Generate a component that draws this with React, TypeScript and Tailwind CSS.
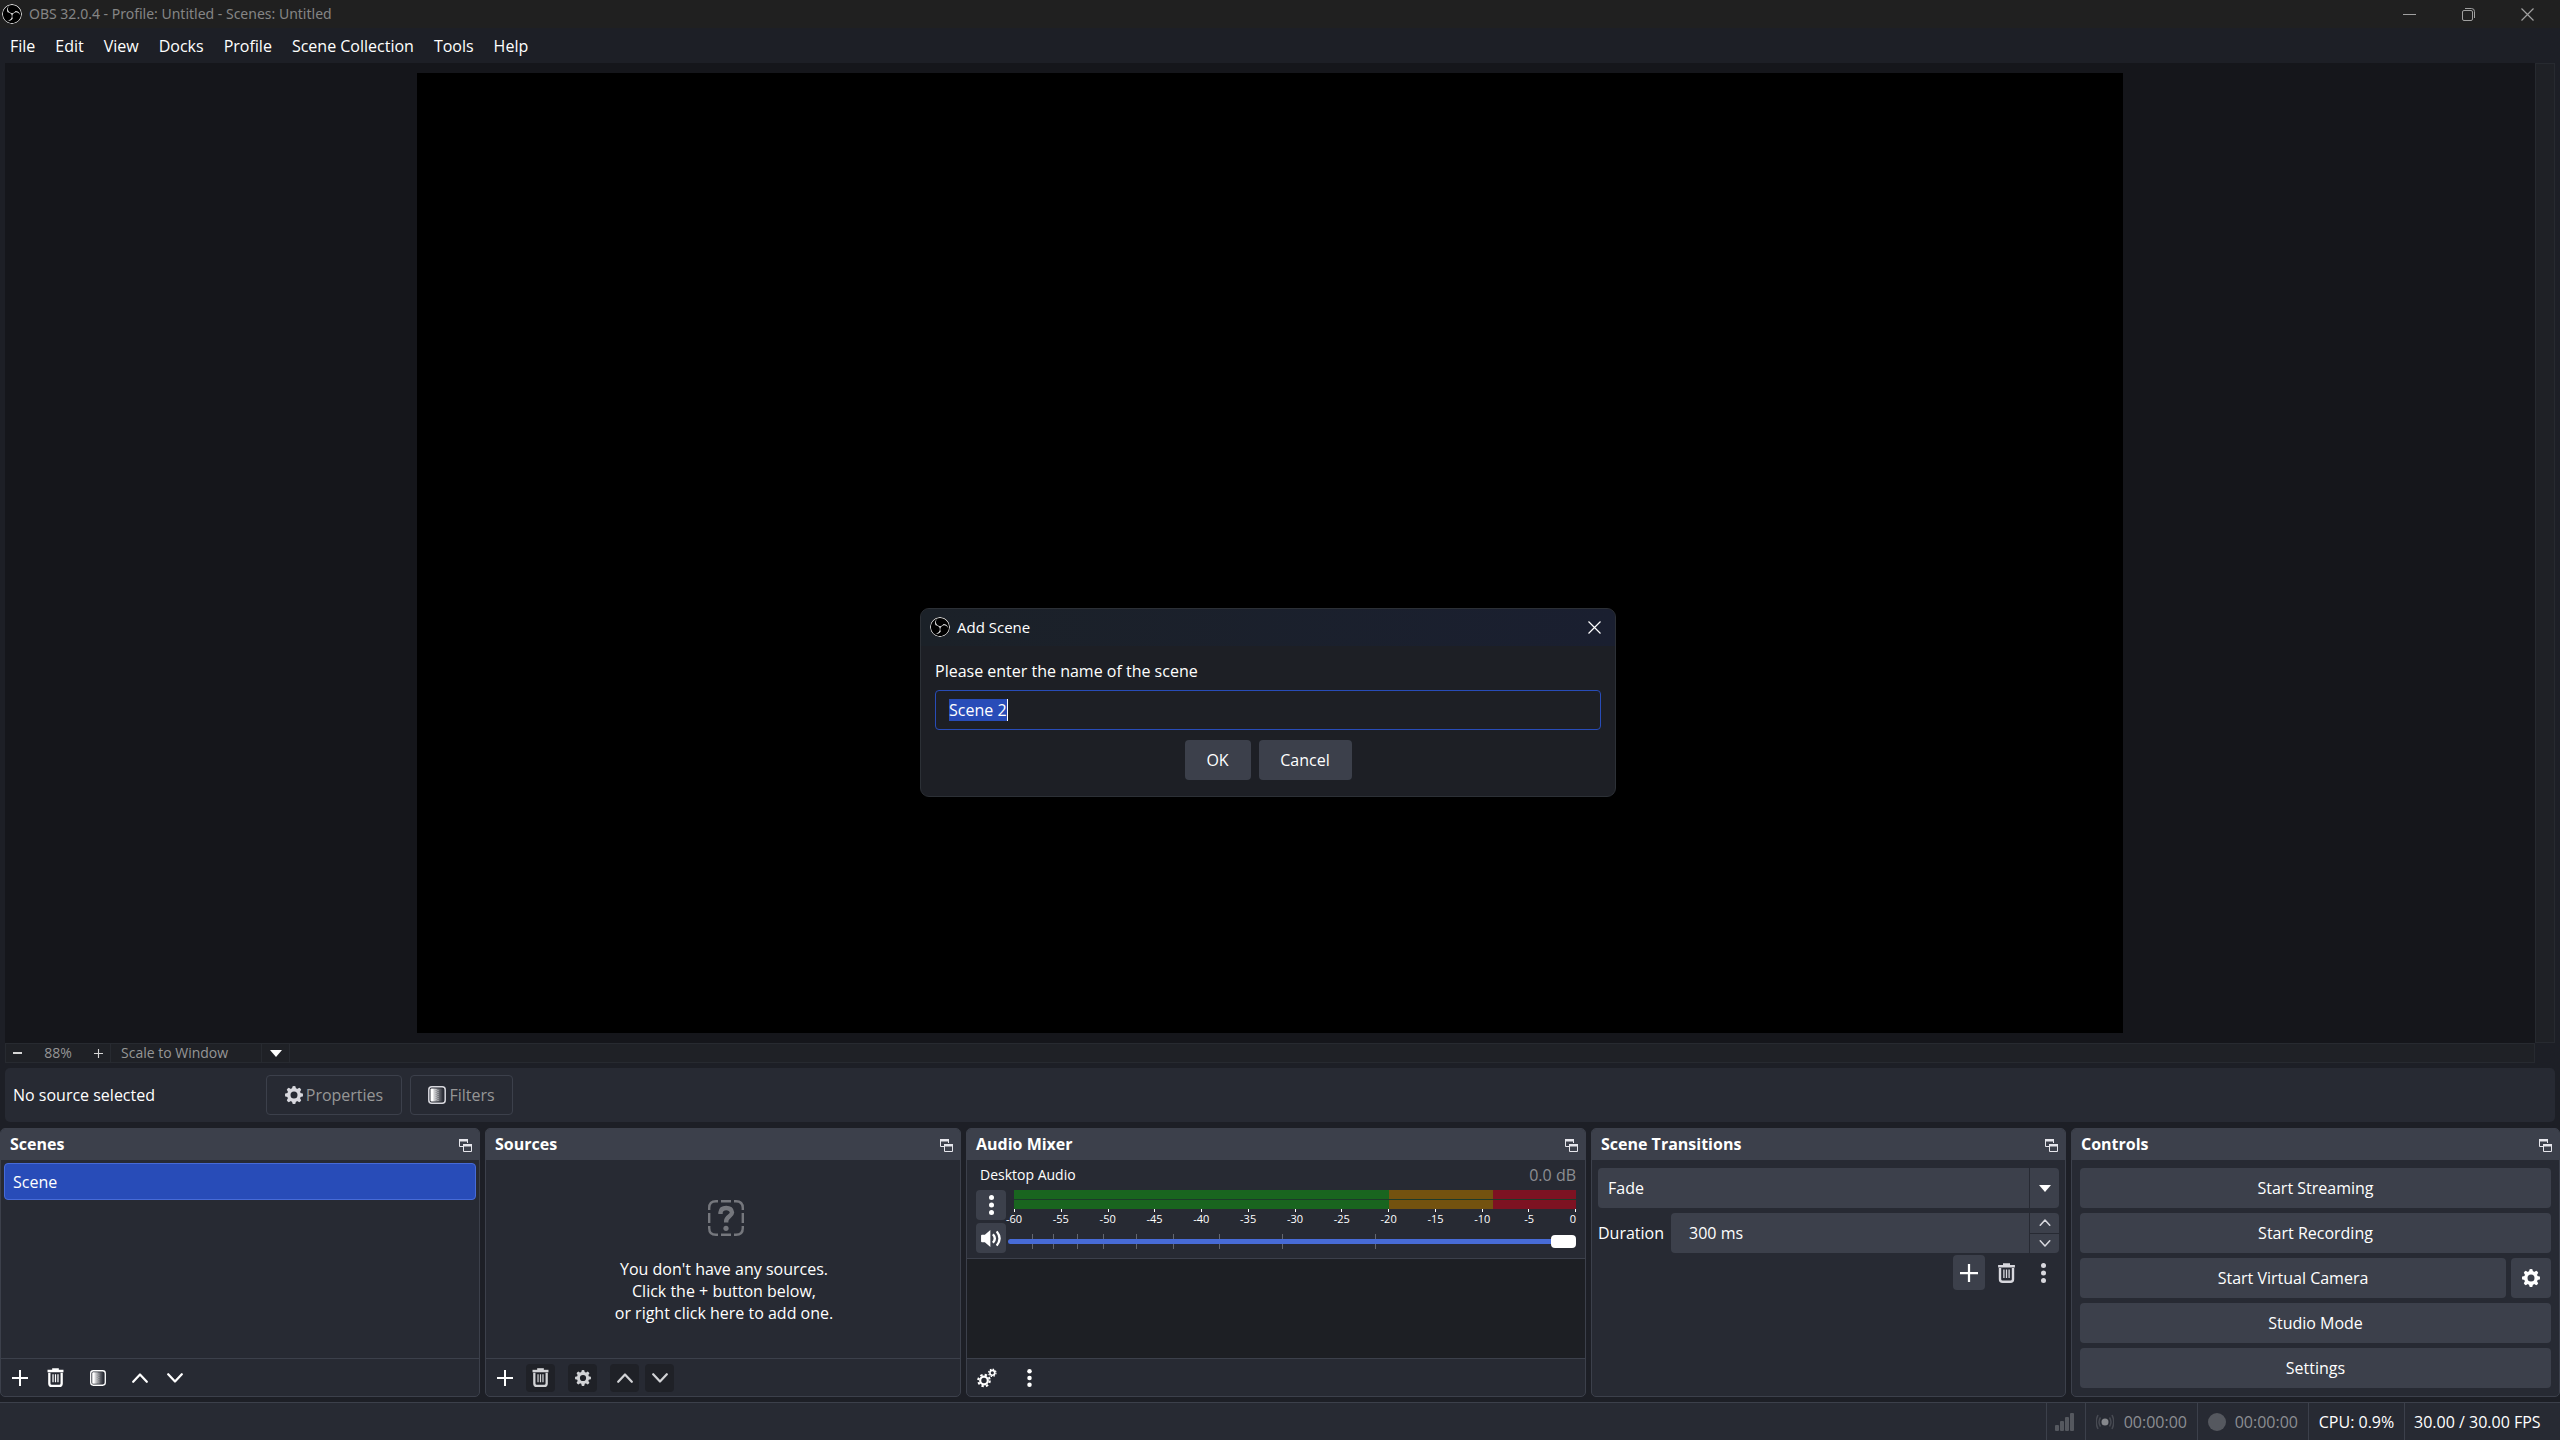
import React, { useEffect, useRef, useState } from "react";
import { SiObsstudio } from "react-icons/si";

type IconProps = { className?: string };

function Logo() {
  return <SiObsstudio className="size-5 shrink-0 rounded-full bg-black text-[#e8e8e8]" aria-hidden />;
}

function Gear({ className = "size-[18px]" }: IconProps) {
  const teeth = [0, 45, 90, 135, 180, 225, 270, 315];
  return (
    <svg viewBox="0 0 18 18" className={className} fill="currentColor" aria-hidden>
      <circle cx="9" cy="9" r="5.2" fill="none" stroke="currentColor" strokeWidth="3.4" />
      {teeth.map((a) => (
        <path key={a} d="M6.9 3 7.6.2Q9-.2 10.4.2L11.1 3Z" transform={`rotate(${a} 9 9)`} />
      ))}
    </svg>
  );
}

function Gears() {
  return (
    <svg viewBox="0 0 20 20" className="size-5" fill="none" stroke="currentColor" aria-hidden>
      <circle cx="7" cy="12.5" r="3.8" strokeWidth="2.2" />
      <circle cx="7" cy="12.5" r="5.8" strokeWidth="2" strokeDasharray="2.4 2.155" />
      <circle cx="15.3" cy="4.8" r="2.4" strokeWidth="1.6" />
      <circle cx="15.3" cy="4.8" r="3.7" strokeWidth="1.2" strokeDasharray="1.5 1.406" />
    </svg>
  );
}

function Trash({ className = "size-[19px]" }: IconProps) {
  return (
    <svg viewBox="0 0 18 20" className={className} fill="none" stroke="currentColor" aria-hidden>
      <path d="M.6 3.2H17.4" strokeWidth="2.6" />
      <path d="M5.5 1.2h7" strokeWidth="2" />
      <path d="M2.5 5v11.2q0 2.6 2.6 2.6h7.8q2.6 0 2.6-2.6V5" strokeWidth="2.4" />
      <path d="M6.4 6.5v8.5M9 6.5v8.5M11.6 6.5v8.5" strokeWidth="1.3" />
    </svg>
  );
}

function Plus({ className = "size-4" }: IconProps) {
  return (
    <svg viewBox="0 0 16 16" className={className} stroke="currentColor" strokeWidth="2" aria-hidden>
      <path d="M8 0v16M0 8h16" />
    </svg>
  );
}

function Chevron({ up = false, className = "w-4 h-[10px]" }: IconProps & { up?: boolean }) {
  return (
    <svg viewBox="0 0 16 10" className={className} fill="none" stroke="currentColor" strokeWidth="2.2" strokeLinecap="round" strokeLinejoin="round" aria-hidden>
      <path d={up ? "M1.2 8.8 8 1.5l6.8 7.3" : "M1.2 1.2 8 8.5l6.8-7.3"} />
    </svg>
  );
}

function Dots({ className = "w-[5px] h-5" }: IconProps) {
  return (
    <svg viewBox="0 0 5 20" className={className} fill="currentColor" aria-hidden>
      <circle cx="2.5" cy="2.5" r="2.5" />
      <circle cx="2.5" cy="10" r="2.5" />
      <circle cx="2.5" cy="17.5" r="2.5" />
    </svg>
  );
}

function FilterIcon({ className = "size-[18px]" }: IconProps) {
  return (
    <svg viewBox="0 0 18 18" className={className} aria-hidden>
      <defs>
        <linearGradient id="filterFade" x1="0" x2="1">
          <stop offset="0.15" stopColor="#fff" />
          <stop offset="0.5" stopColor="#fff" stopOpacity="0.45" />
          <stop offset="0.95" stopColor="#fff" stopOpacity="0.02" />
        </linearGradient>
      </defs>
      <rect x="0.8" y="0.8" width="16.4" height="16.4" rx="3" fill="none" stroke="currentColor" strokeWidth="1.5" />
      <rect x="2.5" y="2.5" width="13" height="13" rx="1" fill="url(#filterFade)" />
      <path d="M8 3v12M10 4v12" stroke="#fff" strokeWidth="1" strokeDasharray="1 1" opacity="0.5" />
    </svg>
  );
}

function Popout() {
  return (
    <svg viewBox="0 0 13 13" className="size-[13px]" fill="none" stroke="currentColor" aria-hidden>
      <path d="M0 1.2h9" strokeWidth="2.4" />
      <path d="M.5 1v6.5H4M8.5 1v3" />
      <path d="M4 6.2h9" strokeWidth="2.4" />
      <path d="M4.5 6v6.5h8V6" />
    </svg>
  );
}

function Speaker() {
  return (
    <svg viewBox="0 0 22 20" className="h-[19px] w-[21px]" fill="currentColor" aria-hidden>
      <path d="M0 7q0-1 1-1h3L9.8 1V19L4 14H1q-1 0-1-1Z" />
      <path d="M12.5 5.5q4 4.5 0 9M16.5 2.5q6 7.5 0 15" fill="none" stroke="currentColor" strokeWidth="2.5" />
    </svg>
  );
}

function QuestionBox() {
  return (
    <svg viewBox="0 0 36 36" className="ml-1 size-9 text-[#75777d]" fill="none" stroke="currentColor" strokeWidth="2.4" aria-hidden>
      <path d="M1.2 10V8q0-6.8 6.8-6.8h2M26 1.2h2q6.8 0 6.8 6.8v2M34.8 26v2q0 6.8-6.8 6.8h-2M10 34.8H8q-6.8 0-6.8-6.8v-2" />
      <path d="M13 1.2h10M13 34.8h10M1.2 13v10M34.8 13v10" />
      <path d="M12.5 14v-1.5q.5-4.5 5.7-4.5t5.8 4.5c0 3.5-5.8 4-5.8 8.5v1.5" strokeWidth="4.4" />
      <circle cx="18" cy="28.3" r="2.6" fill="currentColor" stroke="none" />
    </svg>
  );
}

function Triangle() {
  return (
    <svg viewBox="0 0 12 7" className="h-[7px] w-3" fill="#fff" aria-hidden>
      <path d="M0 0h12L6 7Z" />
    </svg>
  );
}

function Close() {
  return (
    <svg viewBox="0 0 13 13" className="size-[13px]" stroke="currentColor" strokeWidth="1.2" aria-hidden>
      <path d="M.5.5l12 12M12.5.5l-12 12" />
    </svg>
  );
}

function ToolButton({ label, dim = false, children, className = "" }: { label: string; dim?: boolean; children: React.ReactNode; className?: string }) {
  return (
    <button
      type="button"
      aria-label={label}
      className={`flex h-7 w-[29px] items-center justify-center rounded ${dim ? "bg-[#1f2127] text-[#d2d3d6]" : "text-white"} ${className}`}
    >
      {children}
    </button>
  );
}

function Dock({ title, children, toolbar }: { title: string; children: React.ReactNode; toolbar?: React.ReactNode }) {
  return (
    <section className="flex min-w-0 flex-col overflow-hidden rounded-[5px] border border-[#3c404b] bg-[#272a33]">
      <header className="-mt-px flex h-8 shrink-0 items-center justify-between bg-[#3c404b] pr-[7px] pl-[9px]">
        <h2 className="font-bold text-white">{title}</h2>
        <button type="button" aria-label={`Undock ${title}`} className="mt-0.5 text-[#e6e6ec]">
          <Popout />
        </button>
      </header>
      <div className="flex min-h-0 flex-1 flex-col">{children}</div>
      {toolbar && <div className="flex h-[38px] shrink-0 items-center border-t border-[#3c404b]">{toolbar}</div>}
    </section>
  );
}

const levels = [-60, -55, -50, -45, -40, -35, -30, -25, -20, -15, -10, -5, 0];
const faderTicks = [4.2, 8, 12.1, 16.8, 22.5, 29.1, 37.2, 48.2, 64.7];
const menus = ["File", "Edit", "View", "Docks", "Profile", "Scene Collection", "Tools", "Help"];

function ControlButton({ children, className = "" }: { children: React.ReactNode; className?: string }) {
  return (
    <button type="button" className={`flex h-10 items-center justify-center rounded bg-[#3c404b] text-white ${className}`}>
      {children}
    </button>
  );
}

function AddSceneDialog() {
  const input = useRef<HTMLInputElement>(null);
  const [name, setName] = useState("Scene 2");
  useEffect(() => {
    input.current?.focus();
    input.current?.select();
  }, []);
  return (
    <div className="absolute inset-0 flex items-center justify-center pr-6 pb-9">
      <form
        role="dialog"
        aria-label="Add Scene"
        onSubmit={(e) => e.preventDefault()}
        className="w-[696px] rounded-[9px] border border-[#2c3036] bg-[#1d1f25] pb-4"
      >
        <div className="flex h-[37px] items-center gap-[7px] rounded-t-lg bg-linear-to-r from-[#1b2128] to-[#1a1f30] pr-[14px] pl-[9px]">
          <Logo />
          <span className="flex-1 text-[15px]">Add Scene</span>
          <button type="button" aria-label="Close" className="text-white">
            <Close />
          </button>
        </div>
        <div className="px-[14px] pt-[13px]">
          <label htmlFor="scene-name" className="block leading-6">
            Please enter the name of the scene
          </label>
          <div className="relative mt-[7px]">
            <input
              id="scene-name"
              ref={input}
              value={name}
              onChange={(e) => setName(e.target.value)}
              className="block h-10 w-full rounded border border-[#284cb8] bg-[#1d1f25] px-[13px] text-white outline-none selection:bg-[#284cb8] selection:text-white"
            />
            <span className="absolute top-[9px] left-[72px] h-[22px] w-px bg-white" />
          </div>
          <div className="mt-[10px] flex justify-center gap-2">
            <ControlButton className="w-[66px]">OK</ControlButton>
            <ControlButton className="w-[93px]">Cancel</ControlButton>
          </div>
        </div>
      </form>
    </div>
  );
}

export default function App() {
  return (
    <div className="relative flex min-h-screen flex-col bg-[#1d1f26] font-['Open_Sans',sans-serif] text-[16px] leading-[22px] text-white">
      <header className="flex h-7 items-center bg-[#202020] pl-0.5 text-[#858585]">
        <Logo />
        <span className="flex-1 pl-[7px] font-['Noto_Sans',sans-serif] text-[14px]">OBS 32.0.4 - Profile: Untitled - Scenes: Untitled</span>
        <div className="flex items-center gap-[46px] pr-[26px] text-[#a0a0a0]">
          <button type="button" aria-label="Minimize">
            <svg viewBox="0 0 13 13" className="size-[13px]" stroke="currentColor" aria-hidden>
              <path d="M0 6.5h13" />
            </svg>
          </button>
          <button type="button" aria-label="Restore">
            <svg viewBox="0 0 13 13" className="size-[13px]" fill="none" stroke="currentColor" aria-hidden>
              <rect x="0.5" y="2.5" width="10" height="10" rx="1.5" />
              <path d="M3 .5h6.5q3 0 3 3V10" />
            </svg>
          </button>
          <button type="button" aria-label="Close window">
            <Close />
          </button>
        </div>
      </header>

      <nav className="flex h-[35px] items-center gap-5 pl-[10px]">
        {menus.map((m) => (
          <button type="button" key={m}>
            {m}
          </button>
        ))}
      </nav>

      <main className="flex flex-1 flex-col px-[5px]">
        <div className="flex flex-1">
          <div className="flex flex-1 justify-center bg-[#15161b] p-[10px]">
            <div className="aspect-video bg-black" />
          </div>
          <div className="w-5 border border-[#272a30] bg-[#1f2126]" />
        </div>

        <div className="mr-5 flex h-5 border border-[#272a30] bg-[#1f2126] text-sm text-[#969696]">
          <div className="flex w-[105px] items-center justify-between border-r border-[#272a30] px-[7px] text-[#d6d6d6]">
            <button type="button" aria-label="Zoom out" className="h-[2px] w-[9px] bg-current" />
            <span className="text-[#969696]">88%</span>
            <button type="button" aria-label="Zoom in">
              <Plus className="size-[9px]" />
            </button>
          </div>
          <div className="relative flex w-[179px] items-center border-r border-[#272a30]">
            <select aria-label="Preview scale" className="h-full w-full appearance-none bg-transparent pl-[10px] leading-4">
              <option>Scale to Window</option>
            </select>
            <span className="pointer-events-none absolute inset-y-0 right-0 flex w-7 items-center justify-center border-l border-[#272a30]">
              <Triangle />
            </span>
          </div>
        </div>

        <div className="mt-[5px] flex h-[54px] items-center rounded-[5px] bg-[#272a33] pl-2">
          <span className="w-[253px]">No source selected</span>
          <button type="button" disabled className="flex h-10 w-[136px] items-center justify-center gap-[3px] rounded border border-[#3c404b] text-[#969696]">
            <span className="text-[#d8d8de]">
              <Gear />
            </span>
            Properties
          </button>
          <button type="button" disabled className="ml-2 flex h-10 w-[103px] items-center justify-center gap-[3px] rounded border border-[#3c404b] text-[#969696]">
            <span className="text-[#d8d8de]">
              <FilterIcon />
            </span>
            Filters
          </button>
        </div>
      </main>

      <div className="mt-[6px] grid grid-cols-[480fr_476fr_620fr_475fr_489fr] gap-[5px]">
        <Dock
          title="Scenes"
          toolbar={
            <div className="flex items-center pl-1">
              <ToolButton label="Add scene"><Plus /></ToolButton>
              <ToolButton label="Remove scene" className="ml-[7px]"><Trash /></ToolButton>
              <ToolButton label="Scene filters" className="ml-[13px]"><FilterIcon className="size-4" /></ToolButton>
              <ToolButton label="Move scene up" className="ml-[13px]"><Chevron up /></ToolButton>
              <ToolButton label="Move scene down" className="ml-[6px]"><Chevron /></ToolButton>
            </div>
          }
        >
          <ul className="p-[3px]">
            <li className="flex h-[37px] items-center rounded border border-[#476bd7] bg-[#284cb8] px-2">Scene</li>
          </ul>
        </Dock>

        <Dock
          title="Sources"
          toolbar={
            <div className="flex items-center pl-1">
              <ToolButton label="Add source"><Plus /></ToolButton>
              <ToolButton label="Remove source" dim className="ml-[7px]"><Trash /></ToolButton>
              <ToolButton label="Source properties" dim className="ml-[13px]"><Gear className="size-4" /></ToolButton>
              <ToolButton label="Move source up" dim className="ml-[13px]"><Chevron up /></ToolButton>
              <ToolButton label="Move source down" dim className="ml-[6px]"><Chevron /></ToolButton>
            </div>
          }
        >
          <div className="flex flex-1 flex-col items-center justify-center pt-[6px] pl-[2px] text-center">
            <QuestionBox />
            <p className="mt-[22px]">
              You don't have any sources.
              <br />
              Click the + button below,
              <br />
              or right click here to add one.
            </p>
          </div>
        </Dock>

        <Dock
          title="Audio Mixer"
          toolbar={
            <div className="flex items-center pl-[5px]">
              <ToolButton label="Advanced audio properties"><Gears /></ToolButton>
              <ToolButton label="Mixer menu" className="ml-[14px]"><Dots className="h-[18px] w-[5px]" /></ToolButton>
            </div>
          }
        >
          <div className="border-b border-[#3c404b] px-[9px] pb-[5px]">
            <div className="flex h-[30px] items-center justify-between pl-1 text-[14px]">
              <label htmlFor="volume">Desktop Audio</label>
              <span className="text-[16px] text-[#8c8e92]">0.0 dB</span>
            </div>
            <div className="flex gap-[2px]">
              <div className="flex flex-col gap-[3px]">
                <button type="button" aria-label="Desktop Audio menu" className="flex h-[30px] w-[30px] items-center justify-center rounded bg-[#3c404b]">
                  <Dots />
                </button>
                <button type="button" aria-label="Mute Desktop Audio" className="flex h-[30px] w-[30px] items-center justify-center rounded bg-[#3c404b]">
                  <Speaker />
                </button>
              </div>
              <div className="flex-1">
                <div className="ml-[6px]">
                  <div className="grid grid-cols-[375fr_104fr_83fr] grid-rows-[9px_9px] gap-y-px bg-[#1d3a2a]">
                    <i className="bg-[#19651f]" />
                    <i className="bg-[#73520f]" />
                    <i className="bg-[#7d1222]" />
                    <i className="bg-[#19651f]" />
                    <i className="bg-[#73520f]" />
                    <i className="bg-[#7d1222]" />
                  </div>
                  <div className="flex h-[3px] justify-between">
                    {levels.map((l) => (
                      <i key={l} className="w-px bg-white" />
                    ))}
                  </div>
                  <div className="flex h-[14px] justify-between text-[11px] leading-[13px]">
                    {levels.map((l) => (
                      <span key={l} className="flex w-0 justify-center last:justify-end">
                        {l}
                      </span>
                    ))}
                  </div>
                </div>
                <div className="relative mt-2 h-[15px]">
                  {faderTicks.map((t) => (
                    <i key={t} className="absolute top-0 h-[15px] w-px bg-[#63666f]" style={{ left: `${t}%` }} />
                  ))}
                  <input
                    id="volume"
                    type="range"
                    defaultValue={100}
                    className="absolute inset-x-0 top-[5px] h-[5px] w-full appearance-none rounded-full bg-[#476bd7] [&::-webkit-slider-thumb]:h-[13px] [&::-webkit-slider-thumb]:w-[25px] [&::-webkit-slider-thumb]:appearance-none [&::-webkit-slider-thumb]:rounded [&::-webkit-slider-thumb]:bg-white"
                  />
                </div>
              </div>
            </div>
          </div>
          <div className="flex-1 bg-[#1d1f24]" />
        </Dock>

        <Dock title="Scene Transitions">
          <div className="px-[6px] pt-2">
            <div className="relative">
              <select aria-label="Transition" className="h-10 w-full appearance-none rounded bg-[#3c404b] pl-[10px] text-white">
                <option>Fade</option>
              </select>
              <span className="pointer-events-none absolute inset-y-0 right-0 flex w-[30px] items-center justify-center border-l border-[#272a33]">
                <Triangle />
              </span>
            </div>
            <div className="mt-[5px] flex items-center gap-[7px]">
              <label htmlFor="duration">Duration</label>
              <div className="flex h-10 min-w-0 flex-1 rounded bg-[#3c404b]">
                <input id="duration" defaultValue="300 ms" className="min-w-0 flex-1 bg-transparent pl-[18px] text-white outline-none" />
                <div className="flex w-[30px] flex-col border-l border-[#272a33] text-[#d8d8de]">
                  <button type="button" aria-label="Increase duration" className="flex flex-1 items-center justify-center border-b border-[#272a33]">
                    <Chevron up className="h-[7px] w-3" />
                  </button>
                  <button type="button" aria-label="Decrease duration" className="flex flex-1 items-center justify-center">
                    <Chevron className="h-[7px] w-3" />
                  </button>
                </div>
              </div>
            </div>
            <div className="mt-[2px] flex justify-end gap-[5px] text-[#d8d8de]">
              <button type="button" aria-label="Add transition" className="flex h-[35px] w-8 items-center justify-center rounded bg-[#3c404b] text-white">
                <Plus className="size-[18px]" />
              </button>
              <button type="button" aria-label="Remove transition" className="flex h-[35px] w-8 items-center justify-center">
                <Trash className="h-5 w-[19px]" />
              </button>
              <button type="button" aria-label="Transition menu" className="flex h-[35px] w-8 items-center justify-center">
                <Dots />
              </button>
            </div>
          </div>
        </Dock>

        <Dock title="Controls">
          <div className="grid gap-[5px] p-2">
            <ControlButton>Start Streaming</ControlButton>
            <ControlButton>Start Recording</ControlButton>
            <div className="flex gap-[5px]">
              <ControlButton className="flex-1">Start Virtual Camera</ControlButton>
              <button type="button" aria-label="Virtual camera settings" className="flex size-10 items-center justify-center rounded bg-[#3c404b]">
                <Gear />
              </button>
            </div>
            <ControlButton>Studio Mode</ControlButton>
            <ControlButton>Settings</ControlButton>
          </div>
        </Dock>
      </div>

      <footer className="mt-[5px] flex h-[38px] justify-end border-t border-[#3c404b] bg-[#272a33] [&>div]:flex [&>div]:items-center [&>div]:border-l [&>div]:border-[#3c404b]">
        <div className="w-[39px] pl-2">
          <svg viewBox="0 0 19 18" className="h-[18px] w-[19px]" fill="#55585f" aria-hidden>
            <rect x="0" y="12" width="4" height="6" rx="1" />
            <rect x="5" y="8" width="4" height="10" rx="1" />
            <rect x="10" y="4" width="4" height="14" rx="1" />
            <rect x="15" y="0" width="4" height="18" rx="1" />
          </svg>
        </div>
        <div className="w-[112px] justify-between px-[10px] text-[#8c8e92]">
          <svg viewBox="0 0 18 16" className="h-4 w-[18px]" fill="none" stroke="#484b53" strokeWidth="1.5" aria-hidden>
            <circle cx="9" cy="8" r="3.5" fill="#85878c" stroke="none" />
            <path d="M4.5 3.5q-3 4.5 0 9M13.5 3.5q3 4.5 0 9M2 1q-3.5 7 0 14M16 1q3.5 7 0 14" />
          </svg>
          00:00:00
        </div>
        <div className="w-[111px] justify-between px-[10px] text-[#8c8e92]">
          <i className="size-[18px] rounded-full bg-[#55585f]" />
          00:00:00
        </div>
        <div className="w-24 justify-center">CPU: 0.9%</div>
        <div className="w-[156px] pl-[9px]">30.00 / 30.00 FPS</div>
      </footer>

      <AddSceneDialog />
    </div>
  );
}
